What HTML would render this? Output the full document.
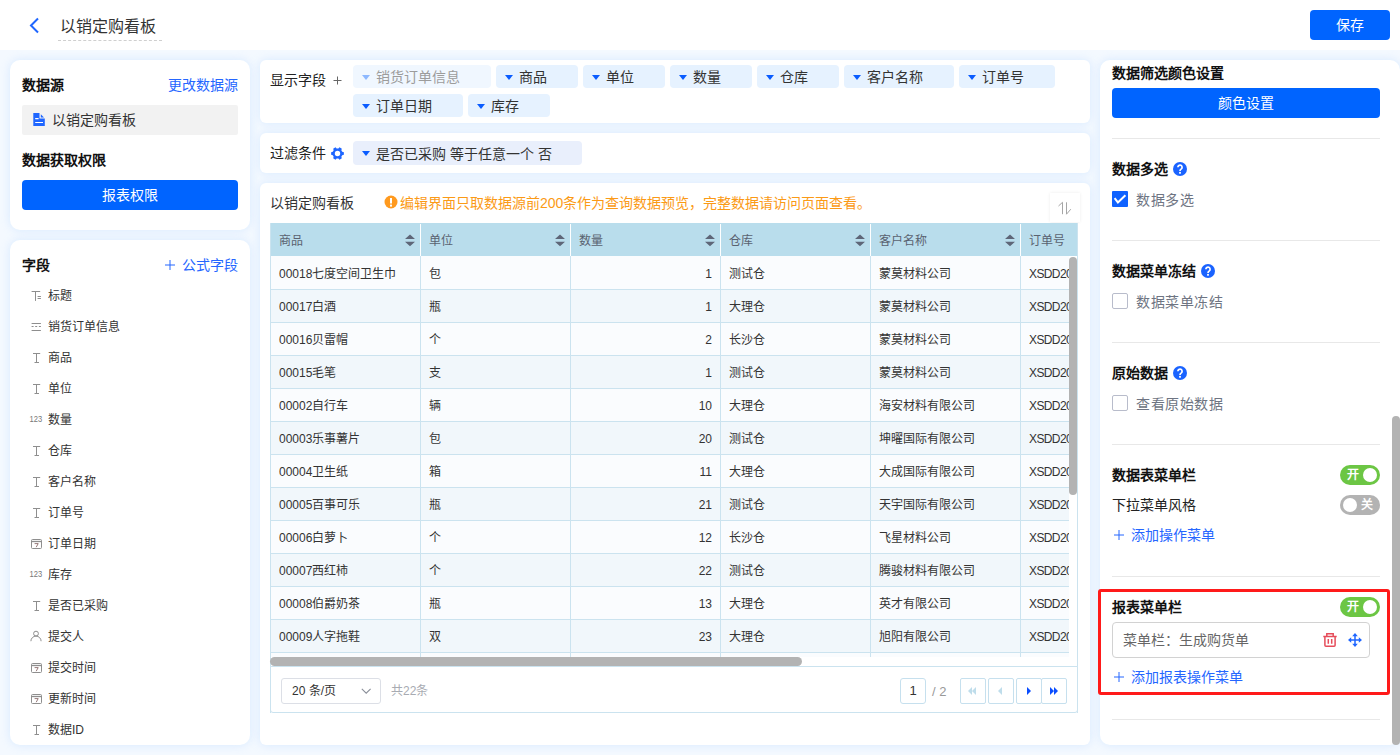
<!DOCTYPE html>
<html lang="zh-CN"><head><meta charset="utf-8">
<style>
*{box-sizing:border-box;margin:0;padding:0}
html,body{width:1400px;height:755px;overflow:hidden}
body{font-family:"Liberation Sans",sans-serif;background:#F4F9FF;position:relative;color:#333}
.abs{position:absolute}
.hdr{left:0;top:0;width:1400px;height:50px;background:#fff}
.panel{position:absolute;background:#fff;box-shadow:0 0 10px rgba(180,214,254,.45)}
.t14{font-size:14px;line-height:16px;white-space:nowrap}
.t12{font-size:12px;line-height:14px;white-space:nowrap}
.t13{font-size:13px;line-height:15px;white-space:nowrap}
.bold{font-weight:bold;color:#111}
.blue{color:#2566FF}
.btn{position:absolute;background:#0064FF;color:#fff;border-radius:4px;font-size:14px;text-align:center}
/* fields */
.fld{position:absolute;left:22px;font-size:12px;line-height:14px;color:#333;white-space:nowrap}
.fld .ic{position:absolute;left:7px;top:0;width:14px;height:14px}
.fld .tx{position:absolute;left:26px;top:1px}
/* chips */
.chip{position:absolute;height:23px;background:#E6F2FF;border-radius:4px;font-size:14px;line-height:23px;color:#333;white-space:nowrap}
.chip .tri{position:absolute;left:9px;top:10px;width:0;height:0;border-left:4px solid transparent;border-right:4px solid transparent;border-top:5px solid #0A5CFF}
.chip .tx{position:absolute;left:23px;top:1px}
/* table */
.tbl{position:absolute;left:270px;top:223px;width:808px;height:490px}
.th{position:absolute;top:0;height:33px;background:#B9DDEC}
.thc{position:absolute;top:0;height:33px;font-size:12px;line-height:33px;color:#5A6270;padding-left:9px;white-space:nowrap}
.sort{position:absolute;top:11px;width:10px;height:12px}
.row{position:absolute;left:0;width:799px;height:33px;border-bottom:1px solid #CBE3EF}
.cell{position:absolute;top:0;height:32px;font-size:12px;line-height:32px;color:#333;padding-left:9px;white-space:nowrap;overflow:hidden}
.vl{position:absolute;width:1px;background:#CBE3EF}
/* right */
.sep{position:absolute;left:1112px;width:268px;height:1px;background:#E8E8E8}
.q{position:absolute;width:14px;height:14px;border-radius:50%;background:#1F6BFF;color:#fff;font-size:11px;line-height:14px;text-align:center;font-weight:bold}
.cb{position:absolute;left:1112px;width:16px;height:16px;border:1px solid #B8BCCB;border-radius:2px;background:#fff}
.tog{position:absolute;left:1340px;width:40px;height:20px;border-radius:10px;background:#6CC644;color:#fff;font-size:12px;line-height:20px}
.tog .k{position:absolute;top:3px;width:14px;height:14px;border-radius:50%;background:#fff}
</style></head><body>
<!-- header -->
<div class="abs hdr"></div>
<svg class="abs" style="left:28px;top:17px" width="14" height="17" viewBox="0 0 14 17"><path d="M10 1.5 L3 8.5 L10 15.5" fill="none" stroke="#1F66FF" stroke-width="2"/></svg>
<div class="abs" style="left:60px;top:17px;font-size:16px;line-height:20px;color:#333">以销定购看板</div>
<div class="abs" style="left:58px;top:40px;width:104px;height:1px;border-top:1px dashed #CFCFCF"></div>
<div class="btn" style="left:1310px;top:10px;width:80px;height:30px;line-height:30px">保存</div>

<!-- left panel 1 -->
<div class="panel" style="left:10px;top:60px;width:240px;height:170px;border-radius:10px"></div>
<div class="abs t14 bold" style="left:22px;top:77px">数据源</div>
<div class="abs t14 blue" style="left:168px;top:77px">更改数据源</div>
<div class="abs" style="left:22px;top:105px;width:216px;height:30px;background:#F2F2F2;border-radius:2px"></div>
<svg class="abs" style="left:33px;top:113px" width="12" height="13" viewBox="0 0 12 13"><path d="M0.3 0 H6.5 V5.5 H11.8 V13 H0.3 Z" fill="#1F66FF"/><path d="M7.8 1.2 L11 4.4 H7.8Z" fill="#1F66FF"/><path d="M2.2 5.6 H5.6 M2.2 9.5 H10" stroke="#fff" stroke-width="1.1"/></svg>
<div class="abs t14" style="left:52px;top:112px;color:#333">以销定购看板</div>
<div class="abs t14 bold" style="left:22px;top:152px">数据获取权限</div>
<div class="btn" style="left:22px;top:180px;width:216px;height:30px;line-height:30px">报表权限</div>

<!-- left panel 2 -->
<div class="panel" style="left:10px;top:240px;width:240px;height:505px;border-radius:10px"></div>
<div class="abs t14 bold" style="left:22px;top:257px">字段</div>
<svg class="abs" style="left:165px;top:260px" width="10" height="10" viewBox="0 0 10 10"><path d="M0 5H10M5 0V10" stroke="#2566FF" stroke-width="1"/></svg><div class="abs t14 blue" style="left:182px;top:257px">公式字段</div>
<div class="fld" style="top:288px"><div class="ic"><svg width="14" height="14" viewBox="0 0 14 14"><path d="M2.6 3.5H11.2M6.5 3.5V12.9M8.6 8.5H11.9M8.6 10.5H11.9" stroke="#8E8E8E" stroke-width="1" fill="none"/></svg></div><div class="tx">标题</div></div>
<div class="fld" style="top:319px"><div class="ic"><svg width="14" height="14" viewBox="0 0 14 14"><path d="M2.6 4.5H11.9M2.6 11.5H11.9M2.6 7.5H4.6M6.2 7.5H8.2M9.9 7.5H11.9" stroke="#8E8E8E" stroke-width="1" fill="none"/></svg></div><div class="tx">销货订单信息</div></div>
<div class="fld" style="top:350px"><div class="ic"><svg width="14" height="14" viewBox="0 0 14 14"><path d="M4 3.5H11.2M7.5 3.5V12.7M5.5 12.5H10" stroke="#8E8E8E" stroke-width="1" fill="none"/></svg></div><div class="tx">商品</div></div>
<div class="fld" style="top:381px"><div class="ic"><svg width="14" height="14" viewBox="0 0 14 14"><path d="M4 3.5H11.2M7.5 3.5V12.7M5.5 12.5H10" stroke="#8E8E8E" stroke-width="1" fill="none"/></svg></div><div class="tx">单位</div></div>
<div class="fld" style="top:412px"><div class="ic"><svg width="14" height="14" viewBox="0 0 14 14"><text x="0.6" y="10.3" font-family="Liberation Sans" font-size="8.4" textLength="12.6" lengthAdjust="spacingAndGlyphs" fill="#777">123</text></svg></div><div class="tx">数量</div></div>
<div class="fld" style="top:443px"><div class="ic"><svg width="14" height="14" viewBox="0 0 14 14"><path d="M4 3.5H11.2M7.5 3.5V12.7M5.5 12.5H10" stroke="#8E8E8E" stroke-width="1" fill="none"/></svg></div><div class="tx">仓库</div></div>
<div class="fld" style="top:474px"><div class="ic"><svg width="14" height="14" viewBox="0 0 14 14"><path d="M4 3.5H11.2M7.5 3.5V12.7M5.5 12.5H10" stroke="#8E8E8E" stroke-width="1" fill="none"/></svg></div><div class="tx">客户名称</div></div>
<div class="fld" style="top:505px"><div class="ic"><svg width="14" height="14" viewBox="0 0 14 14"><path d="M4 3.5H11.2M7.5 3.5V12.7M5.5 12.5H10" stroke="#8E8E8E" stroke-width="1" fill="none"/></svg></div><div class="tx">订单号</div></div>
<div class="fld" style="top:536px"><div class="ic"><svg width="14" height="14" viewBox="0 0 14 14"><rect x="2.5" y="3.5" width="10" height="9" rx="1" stroke="#8E8E8E" stroke-width="1" fill="none"/><path d="M2.5 5.5H12.5" stroke="#8E8E8E" stroke-width="1.3"/><path d="M5.6 7.6H9.2L7.2 11.2" stroke="#8A6A6A" stroke-width="0.9" fill="none"/></svg></div><div class="tx">订单日期</div></div>
<div class="fld" style="top:567px"><div class="ic"><svg width="14" height="14" viewBox="0 0 14 14"><text x="0.6" y="10.3" font-family="Liberation Sans" font-size="8.4" textLength="12.6" lengthAdjust="spacingAndGlyphs" fill="#777">123</text></svg></div><div class="tx">库存</div></div>
<div class="fld" style="top:598px"><div class="ic"><svg width="14" height="14" viewBox="0 0 14 14"><path d="M4 3.5H11.2M7.5 3.5V12.7M5.5 12.5H10" stroke="#8E8E8E" stroke-width="1" fill="none"/></svg></div><div class="tx">是否已采购</div></div>
<div class="fld" style="top:629px"><div class="ic"><svg width="14" height="14" viewBox="0 0 14 14"><circle cx="7" cy="4.6" r="2.4" stroke="#8E8E8E" stroke-width="1" fill="none"/><path d="M1.9 12.2A5.1 5.1 0 0 1 12.1 12.2" stroke="#8E8E8E" stroke-width="1" fill="none"/></svg></div><div class="tx">提交人</div></div>
<div class="fld" style="top:660px"><div class="ic"><svg width="14" height="14" viewBox="0 0 14 14"><rect x="2.5" y="3.5" width="10" height="9" rx="1" stroke="#8E8E8E" stroke-width="1" fill="none"/><path d="M2.5 5.5H12.5" stroke="#8E8E8E" stroke-width="1.3"/><path d="M5.6 7.6H9.2L7.2 11.2" stroke="#8A6A6A" stroke-width="0.9" fill="none"/></svg></div><div class="tx">提交时间</div></div>
<div class="fld" style="top:691px"><div class="ic"><svg width="14" height="14" viewBox="0 0 14 14"><rect x="2.5" y="3.5" width="10" height="9" rx="1" stroke="#8E8E8E" stroke-width="1" fill="none"/><path d="M2.5 5.5H12.5" stroke="#8E8E8E" stroke-width="1.3"/><path d="M5.6 7.6H9.2L7.2 11.2" stroke="#8A6A6A" stroke-width="0.9" fill="none"/></svg></div><div class="tx">更新时间</div></div>
<div class="fld" style="top:722px"><div class="ic"><svg width="14" height="14" viewBox="0 0 14 14"><path d="M4 3.5H11.2M7.5 3.5V12.7M5.5 12.5H10" stroke="#8E8E8E" stroke-width="1" fill="none"/></svg></div><div class="tx">数据ID</div></div>

<!-- middle panel 1 -->
<div class="panel" style="left:260px;top:60px;width:830px;height:63px;border-radius:6px"></div>
<div class="abs t14" style="left:270px;top:72px;color:#222">显示字段</div>
<svg class="abs" style="left:333px;top:76px" width="9" height="9" viewBox="0 0 9 9"><path d="M0.5 4.5H8.5M4.5 0.5V8.5" stroke="#666" stroke-width="1"/></svg>
<div class="chip" style="left:353px;top:65px;width:138px;background:#F0F7FF;color:#9C9C9C"><span class="tri" style="border-top-color:#8DB8FF"></span><span class="tx">销货订单信息</span></div>
<div class="chip" style="left:496px;top:65px;width:82px"><span class="tri"></span><span class="tx">商品</span></div>
<div class="chip" style="left:583px;top:65px;width:82px"><span class="tri"></span><span class="tx">单位</span></div>
<div class="chip" style="left:670px;top:65px;width:82px"><span class="tri"></span><span class="tx">数量</span></div>
<div class="chip" style="left:757px;top:65px;width:82px"><span class="tri"></span><span class="tx">仓库</span></div>
<div class="chip" style="left:844px;top:65px;width:110px"><span class="tri"></span><span class="tx">客户名称</span></div>
<div class="chip" style="left:959px;top:65px;width:96px"><span class="tri"></span><span class="tx">订单号</span></div>
<div class="chip" style="left:353px;top:94px;width:110px"><span class="tri"></span><span class="tx">订单日期</span></div>
<div class="chip" style="left:468px;top:94px;width:82px"><span class="tri"></span><span class="tx">库存</span></div>

<!-- middle panel 2 -->
<div class="panel" style="left:260px;top:133px;width:830px;height:40px;border-radius:6px"></div>
<div class="abs t14" style="left:270px;top:145px;color:#222">过滤条件</div>
<svg class="abs" style="left:331px;top:146.5px" width="13" height="13" viewBox="0 0 13 13"><path fill-rule="evenodd" fill="#1F66FF" d="M11.20 4.79 L12.86 5.15 L12.86 7.85 L11.20 8.21 L10.33 9.71 L10.85 11.33 L8.51 12.68 L7.37 11.42 L5.63 11.42 L4.49 12.68 L2.15 11.33 L2.67 9.71 L1.80 8.21 L0.14 7.85 L0.14 5.15 L1.80 4.79 L2.67 3.29 L2.15 1.67 L4.49 0.32 L5.63 1.58 L7.37 1.58 L8.51 0.32 L10.85 1.67 L10.33 3.29Z M6.5 3.8 A2.7 2.7 0 1 0 6.5 9.2 A2.7 2.7 0 1 0 6.5 3.8Z"/></svg>
<div class="chip" style="left:353px;top:141px;width:229px;height:24px;background:#E9EFFC;line-height:24px"><span class="tri" style="top:10px"></span><span class="tx">是否已采购 等于任意一个 否</span></div>

<!-- middle panel 3 -->
<div class="panel" style="left:260px;top:183px;width:830px;height:562px;border-radius:6px"></div>
<div class="abs t14" style="left:270px;top:195px;color:#333">以销定购看板</div>
<svg class="abs" style="left:384px;top:195px" width="14" height="14" viewBox="0 0 14 14"><circle cx="7" cy="7" r="6.5" fill="#FF9A1F"/><rect x="6" y="3" width="2" height="5.5" fill="#fff"/><rect x="6" y="9.6" width="2" height="2" fill="#fff"/></svg>
<div class="abs t14" style="left:400px;top:195px;color:#FB9A16">编辑界面只取数据源前200条作为查询数据预览，完整数据请访问页面查看。</div>
<div class="abs" style="left:1050px;top:193px;width:30px;height:29px;background:#fff;box-shadow:0 0 3px rgba(0,0,0,.08)"></div>
<svg class="abs" style="left:1056px;top:200px" width="18" height="16" viewBox="0 0 18 16"><path d="M2.5 6L6.5 2.3V14.2M10.5 2.3V14.2L14.8 9.2" stroke="#A6A6A6" stroke-width="1" fill="none"/></svg>

<div class="abs" style="left:270px;top:223px;width:808px;height:33px;background:#B9DDEC"></div>
<div class="abs" style="left:279px;top:234px;font-size:12px;line-height:14px;color:#5A6270">商品</div>
<div class="abs" style="left:405px;top:233px;width:10px;height:13px"><svg width="10" height="13" viewBox="0 0 10 13"><path d="M5 0.4L10 4.9H0Z M0 7.8H10L5 12.3Z" fill="#5E6678"/></svg></div>
<div class="abs" style="left:420px;top:224px;width:1px;height:32px;background:#fff"></div>
<div class="abs" style="left:429px;top:234px;font-size:12px;line-height:14px;color:#5A6270">单位</div>
<div class="abs" style="left:555px;top:233px;width:10px;height:13px"><svg width="10" height="13" viewBox="0 0 10 13"><path d="M5 0.4L10 4.9H0Z M0 7.8H10L5 12.3Z" fill="#5E6678"/></svg></div>
<div class="abs" style="left:570px;top:224px;width:1px;height:32px;background:#fff"></div>
<div class="abs" style="left:579px;top:234px;font-size:12px;line-height:14px;color:#5A6270">数量</div>
<div class="abs" style="left:705px;top:233px;width:10px;height:13px"><svg width="10" height="13" viewBox="0 0 10 13"><path d="M5 0.4L10 4.9H0Z M0 7.8H10L5 12.3Z" fill="#5E6678"/></svg></div>
<div class="abs" style="left:720px;top:224px;width:1px;height:32px;background:#fff"></div>
<div class="abs" style="left:729px;top:234px;font-size:12px;line-height:14px;color:#5A6270">仓库</div>
<div class="abs" style="left:855px;top:233px;width:10px;height:13px"><svg width="10" height="13" viewBox="0 0 10 13"><path d="M5 0.4L10 4.9H0Z M0 7.8H10L5 12.3Z" fill="#5E6678"/></svg></div>
<div class="abs" style="left:870px;top:224px;width:1px;height:32px;background:#fff"></div>
<div class="abs" style="left:879px;top:234px;font-size:12px;line-height:14px;color:#5A6270">客户名称</div>
<div class="abs" style="left:1005px;top:233px;width:10px;height:13px"><svg width="10" height="13" viewBox="0 0 10 13"><path d="M5 0.4L10 4.9H0Z M0 7.8H10L5 12.3Z" fill="#5E6678"/></svg></div>
<div class="abs" style="left:1020px;top:224px;width:1px;height:32px;background:#fff"></div>
<div class="abs" style="left:1029px;top:234px;font-size:12px;line-height:14px;color:#5A6270">订单号</div>
<div class="abs" style="left:270px;top:256px;width:799px;height:33px;background:#FAFCFE"></div>
<div class="abs" style="left:279px;top:267px;font-size:12px;line-height:14px;color:#333">00018七度空间卫生巾</div>
<div class="abs" style="left:429px;top:267px;font-size:12px;line-height:14px;color:#333">包</div>
<div class="abs" style="left:570px;top:267px;width:142px;text-align:right;font-size:12px;line-height:14px;color:#333">1</div>
<div class="abs" style="left:729px;top:267px;font-size:12px;line-height:14px;color:#333">测试仓</div>
<div class="abs" style="left:879px;top:267px;font-size:12px;line-height:14px;color:#333">蒙莫材料公司</div>
<div class="abs" style="left:1029px;top:267px;width:40px;overflow:hidden;font-size:12px;line-height:14px;color:#333;letter-spacing:-0.6px">XSDD2023</div>
<div class="abs" style="left:270px;top:289px;width:799px;height:33px;background:#F1F7FB"></div>
<div class="abs" style="left:279px;top:300px;font-size:12px;line-height:14px;color:#333">00017白酒</div>
<div class="abs" style="left:429px;top:300px;font-size:12px;line-height:14px;color:#333">瓶</div>
<div class="abs" style="left:570px;top:300px;width:142px;text-align:right;font-size:12px;line-height:14px;color:#333">1</div>
<div class="abs" style="left:729px;top:300px;font-size:12px;line-height:14px;color:#333">大理仓</div>
<div class="abs" style="left:879px;top:300px;font-size:12px;line-height:14px;color:#333">蒙莫材料公司</div>
<div class="abs" style="left:1029px;top:300px;width:40px;overflow:hidden;font-size:12px;line-height:14px;color:#333;letter-spacing:-0.6px">XSDD2023</div>
<div class="abs" style="left:270px;top:322px;width:799px;height:33px;background:#FAFCFE"></div>
<div class="abs" style="left:279px;top:333px;font-size:12px;line-height:14px;color:#333">00016贝雷帽</div>
<div class="abs" style="left:429px;top:333px;font-size:12px;line-height:14px;color:#333">个</div>
<div class="abs" style="left:570px;top:333px;width:142px;text-align:right;font-size:12px;line-height:14px;color:#333">2</div>
<div class="abs" style="left:729px;top:333px;font-size:12px;line-height:14px;color:#333">长沙仓</div>
<div class="abs" style="left:879px;top:333px;font-size:12px;line-height:14px;color:#333">蒙莫材料公司</div>
<div class="abs" style="left:1029px;top:333px;width:40px;overflow:hidden;font-size:12px;line-height:14px;color:#333;letter-spacing:-0.6px">XSDD2023</div>
<div class="abs" style="left:270px;top:355px;width:799px;height:33px;background:#F1F7FB"></div>
<div class="abs" style="left:279px;top:366px;font-size:12px;line-height:14px;color:#333">00015毛笔</div>
<div class="abs" style="left:429px;top:366px;font-size:12px;line-height:14px;color:#333">支</div>
<div class="abs" style="left:570px;top:366px;width:142px;text-align:right;font-size:12px;line-height:14px;color:#333">1</div>
<div class="abs" style="left:729px;top:366px;font-size:12px;line-height:14px;color:#333">测试仓</div>
<div class="abs" style="left:879px;top:366px;font-size:12px;line-height:14px;color:#333">蒙莫材料公司</div>
<div class="abs" style="left:1029px;top:366px;width:40px;overflow:hidden;font-size:12px;line-height:14px;color:#333;letter-spacing:-0.6px">XSDD2023</div>
<div class="abs" style="left:270px;top:388px;width:799px;height:33px;background:#FAFCFE"></div>
<div class="abs" style="left:279px;top:399px;font-size:12px;line-height:14px;color:#333">00002自行车</div>
<div class="abs" style="left:429px;top:399px;font-size:12px;line-height:14px;color:#333">辆</div>
<div class="abs" style="left:570px;top:399px;width:142px;text-align:right;font-size:12px;line-height:14px;color:#333">10</div>
<div class="abs" style="left:729px;top:399px;font-size:12px;line-height:14px;color:#333">大理仓</div>
<div class="abs" style="left:879px;top:399px;font-size:12px;line-height:14px;color:#333">海安材料有限公司</div>
<div class="abs" style="left:1029px;top:399px;width:40px;overflow:hidden;font-size:12px;line-height:14px;color:#333;letter-spacing:-0.6px">XSDD2023</div>
<div class="abs" style="left:270px;top:421px;width:799px;height:33px;background:#F1F7FB"></div>
<div class="abs" style="left:279px;top:432px;font-size:12px;line-height:14px;color:#333">00003乐事薯片</div>
<div class="abs" style="left:429px;top:432px;font-size:12px;line-height:14px;color:#333">包</div>
<div class="abs" style="left:570px;top:432px;width:142px;text-align:right;font-size:12px;line-height:14px;color:#333">20</div>
<div class="abs" style="left:729px;top:432px;font-size:12px;line-height:14px;color:#333">测试仓</div>
<div class="abs" style="left:879px;top:432px;font-size:12px;line-height:14px;color:#333">坤曜国际有限公司</div>
<div class="abs" style="left:1029px;top:432px;width:40px;overflow:hidden;font-size:12px;line-height:14px;color:#333;letter-spacing:-0.6px">XSDD2023</div>
<div class="abs" style="left:270px;top:454px;width:799px;height:33px;background:#FAFCFE"></div>
<div class="abs" style="left:279px;top:465px;font-size:12px;line-height:14px;color:#333">00004卫生纸</div>
<div class="abs" style="left:429px;top:465px;font-size:12px;line-height:14px;color:#333">箱</div>
<div class="abs" style="left:570px;top:465px;width:142px;text-align:right;font-size:12px;line-height:14px;color:#333">11</div>
<div class="abs" style="left:729px;top:465px;font-size:12px;line-height:14px;color:#333">大理仓</div>
<div class="abs" style="left:879px;top:465px;font-size:12px;line-height:14px;color:#333">大成国际有限公司</div>
<div class="abs" style="left:1029px;top:465px;width:40px;overflow:hidden;font-size:12px;line-height:14px;color:#333;letter-spacing:-0.6px">XSDD2023</div>
<div class="abs" style="left:270px;top:487px;width:799px;height:33px;background:#F1F7FB"></div>
<div class="abs" style="left:279px;top:498px;font-size:12px;line-height:14px;color:#333">00005百事可乐</div>
<div class="abs" style="left:429px;top:498px;font-size:12px;line-height:14px;color:#333">瓶</div>
<div class="abs" style="left:570px;top:498px;width:142px;text-align:right;font-size:12px;line-height:14px;color:#333">21</div>
<div class="abs" style="left:729px;top:498px;font-size:12px;line-height:14px;color:#333">测试仓</div>
<div class="abs" style="left:879px;top:498px;font-size:12px;line-height:14px;color:#333">天宇国际有限公司</div>
<div class="abs" style="left:1029px;top:498px;width:40px;overflow:hidden;font-size:12px;line-height:14px;color:#333;letter-spacing:-0.6px">XSDD2023</div>
<div class="abs" style="left:270px;top:520px;width:799px;height:33px;background:#FAFCFE"></div>
<div class="abs" style="left:279px;top:531px;font-size:12px;line-height:14px;color:#333">00006白萝卜</div>
<div class="abs" style="left:429px;top:531px;font-size:12px;line-height:14px;color:#333">个</div>
<div class="abs" style="left:570px;top:531px;width:142px;text-align:right;font-size:12px;line-height:14px;color:#333">12</div>
<div class="abs" style="left:729px;top:531px;font-size:12px;line-height:14px;color:#333">长沙仓</div>
<div class="abs" style="left:879px;top:531px;font-size:12px;line-height:14px;color:#333">飞星材料公司</div>
<div class="abs" style="left:1029px;top:531px;width:40px;overflow:hidden;font-size:12px;line-height:14px;color:#333;letter-spacing:-0.6px">XSDD2023</div>
<div class="abs" style="left:270px;top:553px;width:799px;height:33px;background:#F1F7FB"></div>
<div class="abs" style="left:279px;top:564px;font-size:12px;line-height:14px;color:#333">00007西红柿</div>
<div class="abs" style="left:429px;top:564px;font-size:12px;line-height:14px;color:#333">个</div>
<div class="abs" style="left:570px;top:564px;width:142px;text-align:right;font-size:12px;line-height:14px;color:#333">22</div>
<div class="abs" style="left:729px;top:564px;font-size:12px;line-height:14px;color:#333">测试仓</div>
<div class="abs" style="left:879px;top:564px;font-size:12px;line-height:14px;color:#333">腾骏材料有限公司</div>
<div class="abs" style="left:1029px;top:564px;width:40px;overflow:hidden;font-size:12px;line-height:14px;color:#333;letter-spacing:-0.6px">XSDD2023</div>
<div class="abs" style="left:270px;top:586px;width:799px;height:33px;background:#FAFCFE"></div>
<div class="abs" style="left:279px;top:597px;font-size:12px;line-height:14px;color:#333">00008伯爵奶茶</div>
<div class="abs" style="left:429px;top:597px;font-size:12px;line-height:14px;color:#333">瓶</div>
<div class="abs" style="left:570px;top:597px;width:142px;text-align:right;font-size:12px;line-height:14px;color:#333">13</div>
<div class="abs" style="left:729px;top:597px;font-size:12px;line-height:14px;color:#333">大理仓</div>
<div class="abs" style="left:879px;top:597px;font-size:12px;line-height:14px;color:#333">英才有限公司</div>
<div class="abs" style="left:1029px;top:597px;width:40px;overflow:hidden;font-size:12px;line-height:14px;color:#333;letter-spacing:-0.6px">XSDD2023</div>
<div class="abs" style="left:270px;top:619px;width:799px;height:33px;background:#F1F7FB"></div>
<div class="abs" style="left:279px;top:630px;font-size:12px;line-height:14px;color:#333">00009人字拖鞋</div>
<div class="abs" style="left:429px;top:630px;font-size:12px;line-height:14px;color:#333">双</div>
<div class="abs" style="left:570px;top:630px;width:142px;text-align:right;font-size:12px;line-height:14px;color:#333">23</div>
<div class="abs" style="left:729px;top:630px;font-size:12px;line-height:14px;color:#333">大理仓</div>
<div class="abs" style="left:879px;top:630px;font-size:12px;line-height:14px;color:#333">旭阳有限公司</div>
<div class="abs" style="left:1029px;top:630px;width:40px;overflow:hidden;font-size:12px;line-height:14px;color:#333;letter-spacing:-0.6px">XSDD2023</div>
<div class="abs" style="left:270px;top:289px;width:799px;height:1px;background:#CBE3EF"></div>
<div class="abs" style="left:270px;top:322px;width:799px;height:1px;background:#CBE3EF"></div>
<div class="abs" style="left:270px;top:355px;width:799px;height:1px;background:#CBE3EF"></div>
<div class="abs" style="left:270px;top:388px;width:799px;height:1px;background:#CBE3EF"></div>
<div class="abs" style="left:270px;top:421px;width:799px;height:1px;background:#CBE3EF"></div>
<div class="abs" style="left:270px;top:454px;width:799px;height:1px;background:#CBE3EF"></div>
<div class="abs" style="left:270px;top:487px;width:799px;height:1px;background:#CBE3EF"></div>
<div class="abs" style="left:270px;top:520px;width:799px;height:1px;background:#CBE3EF"></div>
<div class="abs" style="left:270px;top:553px;width:799px;height:1px;background:#CBE3EF"></div>
<div class="abs" style="left:270px;top:586px;width:799px;height:1px;background:#CBE3EF"></div>
<div class="abs" style="left:270px;top:619px;width:799px;height:1px;background:#CBE3EF"></div>
<div class="abs" style="left:270px;top:652px;width:799px;height:1px;background:#CBE3EF"></div>
<div class="abs" style="left:270px;top:653px;width:799px;height:4px;background:#FAFCFE"></div>
<div class="abs" style="left:420px;top:256px;width:1px;height:401px;background:#CBE3EF"></div>
<div class="abs" style="left:570px;top:256px;width:1px;height:401px;background:#CBE3EF"></div>
<div class="abs" style="left:720px;top:256px;width:1px;height:401px;background:#CBE3EF"></div>
<div class="abs" style="left:870px;top:256px;width:1px;height:401px;background:#CBE3EF"></div>
<div class="abs" style="left:1020px;top:256px;width:1px;height:401px;background:#CBE3EF"></div>
<div class="abs" style="left:270px;top:223px;width:1px;height:490px;background:#CBE3EF"></div>
<div class="abs" style="left:1077px;top:223px;width:1px;height:490px;background:#CBE3EF"></div>
<div class="abs" style="left:1069px;top:257px;width:8px;height:238px;border-radius:4px;background:#B3B3B3"></div>
<div class="abs" style="left:270px;top:657px;width:532px;height:9px;border-radius:5px;background:#B3B3B3"></div>
<div class="abs" style="left:270px;top:666px;width:808px;height:47px;border:1px solid #CBE3EF;border-radius:0 0 3px 3px;background:#fff"></div>
<div class="abs" style="left:281px;top:678px;width:100px;height:26px;border:1px solid #DCDFE6;border-radius:3px;background:#fff"></div>
<div class="abs" style="left:292px;top:684px;font-size:12px;line-height:14px;color:#333">20 条/页</div>
<svg class="abs" style="left:360.5px;top:688px" width="11" height="7" viewBox="0 0 11 7"><path d="M0.8 0.8L5.2 5.2L9.6 0.8" stroke="#8A8F99" stroke-width="1.1" fill="none"/></svg>
<div class="abs" style="left:391px;top:684px;font-size:12px;line-height:14px;color:#A8ABB2">共22条</div>
<div class="abs" style="left:900px;top:678px;width:26px;height:26px;border:1px solid #C6E0EE;border-radius:3px;background:#fff;font-size:13px;line-height:24px;text-align:center;color:#333">1</div>
<div class="abs" style="left:932px;top:684px;font-size:13px;line-height:15px;color:#999">/ 2</div>
<div class="abs" style="left:960px;top:678px;width:26px;height:26px;border:1px solid #C6E0EE;border-radius:2px;background:#fff"><svg style="position:absolute;left:6px;top:6px" width="12" height="12" viewBox="0 0 12 12"><path d="M5 2L1 6L5 10Z M9 2L5 6L9 10Z" fill="#BFDDEB"/></svg></div>
<div class="abs" style="left:988px;top:678px;width:26px;height:26px;border:1px solid #C6E0EE;border-radius:2px;background:#fff"><svg style="position:absolute;left:6px;top:6px" width="12" height="12" viewBox="0 0 12 12"><path d="M7 2L3 6L7 10Z" fill="#BFDDEB"/></svg></div>
<div class="abs" style="left:1016px;top:678px;width:26px;height:26px;border:1px solid #C6E0EE;border-radius:2px;background:#fff"><svg style="position:absolute;left:6px;top:6px" width="12" height="12" viewBox="0 0 12 12"><path d="M4 2L8 6L4 10Z" fill="#0A4DFF"/></svg></div>
<div class="abs" style="left:1041px;top:678px;width:26px;height:26px;border:1px solid #C6E0EE;border-radius:2px;background:#fff"><svg style="position:absolute;left:6px;top:6px" width="12" height="12" viewBox="0 0 12 12"><path d="M2 2L6 6L2 10Z M6 2L10 6L6 10Z" fill="#0A4DFF"/></svg></div>

<!-- right panel -->
<div class="panel" style="left:1100px;top:60px;width:300px;height:685px;border-radius:10px"></div>
<div class="abs t14 bold" style="left:1112px;top:65px">数据筛选颜色设置</div>
<div class="btn" style="left:1112px;top:88px;width:268px;height:30px;line-height:30px">颜色设置</div>
<div class="sep" style="top:138px"></div>
<div class="sep" style="top:240px"></div>
<div class="sep" style="top:342px"></div>
<div class="sep" style="top:444px"></div>
<div class="sep" style="top:576px"></div>
<div class="sep" style="top:719px"></div>
<div class="abs t14 bold" style="left:1112px;top:161px">数据多选</div>
<svg class="abs" style="left:1173px;top:162px" width="14" height="14" viewBox="0 0 14 14"><circle cx="7" cy="7" r="7" fill="#1A63FF"/><path d="M4.9 5.3A2.1 2.1 0 1 1 8.3 6.9C7.4 7.5 7 7.9 7 8.9" stroke="#fff" stroke-width="1.7" fill="none"/><rect x="6.1" y="9.9" width="1.8" height="1.8" fill="#fff"/></svg>
<div class="abs" style="left:1112px;top:191px;width:16px;height:16px;background:#0F62FF;border-radius:1px"><svg width="16" height="16" viewBox="0 0 16 16"><path d="M2.6 7.2L5.9 11.4L13.4 4.2" stroke="#fff" stroke-width="2" fill="none"/></svg></div>
<div class="abs" style="left:1136px;top:192px;font-size:14px;letter-spacing:0.6px;line-height:16px;white-space:nowrap;color:#6E7482">数据多选</div>
<div class="abs t14 bold" style="left:1112px;top:263px">数据菜单冻结</div>
<svg class="abs" style="left:1201px;top:264px" width="14" height="14" viewBox="0 0 14 14"><circle cx="7" cy="7" r="7" fill="#1A63FF"/><path d="M4.9 5.3A2.1 2.1 0 1 1 8.3 6.9C7.4 7.5 7 7.9 7 8.9" stroke="#fff" stroke-width="1.7" fill="none"/><rect x="6.1" y="9.9" width="1.8" height="1.8" fill="#fff"/></svg>
<div class="cb" style="top:293px"></div>
<div class="abs" style="left:1136px;top:294px;font-size:14px;letter-spacing:0.6px;line-height:16px;white-space:nowrap;color:#6E7482">数据菜单冻结</div>
<div class="abs t14 bold" style="left:1112px;top:365px">原始数据</div>
<svg class="abs" style="left:1173px;top:366px" width="14" height="14" viewBox="0 0 14 14"><circle cx="7" cy="7" r="7" fill="#1A63FF"/><path d="M4.9 5.3A2.1 2.1 0 1 1 8.3 6.9C7.4 7.5 7 7.9 7 8.9" stroke="#fff" stroke-width="1.7" fill="none"/><rect x="6.1" y="9.9" width="1.8" height="1.8" fill="#fff"/></svg>
<div class="cb" style="top:395px"></div>
<div class="abs" style="left:1136px;top:396px;font-size:14px;letter-spacing:0.6px;line-height:16px;white-space:nowrap;color:#6E7482">查看原始数据</div>
<div class="abs t14 bold" style="left:1112px;top:467px">数据表菜单栏</div>
<div class="tog" style="top:465px"><span style="position:absolute;left:7px;top:0;font-weight:bold">开</span><span class="k" style="left:23px"></span></div>
<div class="abs t14" style="left:1112px;top:497px;color:#222">下拉菜单风格</div>
<div class="tog" style="top:495px;background:#B3B3B3"><span class="k" style="left:3px"></span><span style="position:absolute;left:21px;top:0;font-weight:bold">关</span></div>
<svg class="abs" style="left:1114px;top:530px" width="10" height="10" viewBox="0 0 10 10"><path d="M0 5H10M5 0V10" stroke="#2566FF" stroke-width="1"/></svg><div class="abs t14 blue" style="left:1131px;top:527px">添加操作菜单</div>
<div class="abs" style="left:1098px;top:589px;width:292px;height:106px;border:3px solid #FF1A1A;border-radius:3px"></div>
<div class="abs t14 bold" style="left:1112px;top:599px">报表菜单栏</div>
<div class="tog" style="top:597px"><span style="position:absolute;left:7px;top:0;font-weight:bold">开</span><span class="k" style="left:23px"></span></div>
<div class="abs" style="left:1112px;top:622px;width:258px;height:36px;border:1px solid #D2D2D2;border-radius:4px;background:#fff"></div>
<div class="abs t14" style="left:1123px;top:632px;color:#666">菜单栏：生成购货单</div>
<svg class="abs" style="left:1323px;top:632px" width="14" height="15" viewBox="0 0 14 15"><path d="M0.3 4.6H13.7M3.8 4.6V1.7H10.2V4.6M1.9 4.6V13.2Q1.9 14.2 2.9 14.2H11.1Q12.1 14.2 12.1 13.2V4.6M5.3 7V11.8M8.7 7V11.8" stroke="#E64C5A" stroke-width="1.5" fill="none"/></svg>
<svg class="abs" style="left:1348px;top:633px" width="14" height="14" viewBox="0 0 14 14"><path d="M7 2V12M2 7H12" stroke="#1F66FF" stroke-width="1.5"/><path d="M7 0L4.2 3.2H9.8Z M7 14L4.2 10.8H9.8Z M0 7L3.2 4.2V9.8Z M14 7L10.8 4.2V9.8Z" fill="#1F66FF"/></svg>
<svg class="abs" style="left:1114px;top:672px" width="10" height="10" viewBox="0 0 10 10"><path d="M0 5H10M5 0V10" stroke="#2566FF" stroke-width="1"/></svg><div class="abs t14 blue" style="left:1131px;top:669px">添加报表操作菜单</div>
<div class="abs" style="left:1392px;top:416px;width:8px;height:329px;border-radius:4px;background:#B3B3B3"></div>
</body></html>
